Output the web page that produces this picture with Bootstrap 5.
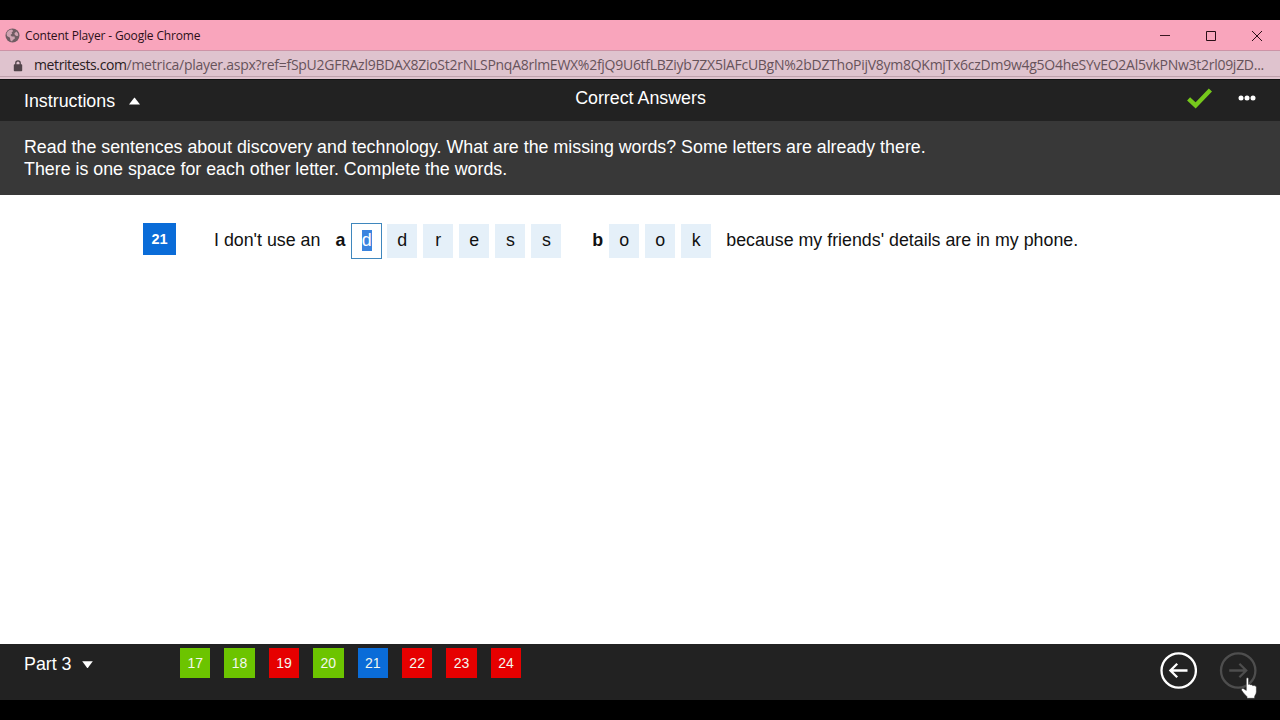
<!DOCTYPE html>
<html lang="en">
<head>
<meta charset="utf-8">
<meta name="viewport" content="width=device-width, initial-scale=1">
<title>Content Player</title>
<link href="https://cdn.jsdelivr.net/npm/bootstrap@5.3.0/dist/css/bootstrap.min.css" rel="stylesheet">
<style>
body{font-family:"Liberation Sans",Arial,sans-serif;font-size:17.82px;line-height:22px;color:#111;background:#000;overflow:hidden}
svg{display:block;flex:none}
.screen{height:720px;padding:20px 0}
.ui-font{font-family:"Open Sans","Noto Sans",sans-serif}
.titlebar{height:31px;background:#f9a5bc;border-bottom:1px solid #cd93a6;padding:0 17px 0 5px}
.caption-text{font-size:12px;letter-spacing:-.155px;color:#2b1018;margin:2px 0 0 5px}
.winbtns{gap:34px;padding-top:1px}
.addressbar{height:29px;background:#dfc3ce;border-bottom:1px solid #111;box-shadow:inset 0 -2px #dfc3ce,inset 0 -3px #bfa0ac;padding:0 0 2px 13px}
.url{font-size:14px;letter-spacing:-.27px;color:#67535b;margin:1px 0 0 11px}
.host{color:#2a1c22;letter-spacing:-.39px}
.topbar{height:41px;background:#222;color:#fff;padding:0 23px 0 24px}
.topbar .side{width:200px}
.topbar .toggle{gap:14px;padding-top:1px}
.page-title{padding-bottom:5px}
.tools{gap:24px;padding-bottom:5px}
.instructions{height:74px;background:#383838;color:#fff;padding:15px 24px 0}
.work{background:#fff;padding:28px 0 0 143px}
.qnum{width:33px;height:32px;background:#0a6cd8;color:#fff;font-size:14.5px;font-weight:700;margin-right:38px}
.lead-in{margin-right:15px}
.word{gap:6px;margin-left:6px}
.word-1{margin-right:31px}
.word-2{margin-right:15px}
.cell{width:30px;height:34px;background:#e5f0f9;padding-bottom:2px}
.cell.active{width:31px;height:36px;margin-right:-1px;background:#fff;border:1px solid #3f87bd}
.cell.active span{background:#3a84df;color:#fff;line-height:21px}
.sentence>span,.sentence>b{padding-bottom:2px}
.bottombar{height:56px;background:#222;color:#fff;padding:4px 23px 0 24px}
.part{width:156px;height:31px;gap:10px}
.tiles{gap:14px}
.tile{width:30.4px;height:30.4px;font-size:14px;color:#f4f8ee}
.ok{background:#6cc400}
.bad{background:#e60000}
.now{background:#0a6cd8}
.nav-arrows{gap:22px;padding-top:4px}
.pointer{right:-1px;top:29px}
</style>
</head>
<body>
<div class="screen d-flex flex-column">
  <header class="titlebar ui-font d-flex align-items-center">
    <svg width="15" height="15" viewBox="0 0 15 15"><circle cx="7.5" cy="7.5" r="7" fill="#705c63"/><path d="M1.500 5.500C2.500 3 4.500 1.600 7 1.600L8.200 3 6.600 4.400 7.200 5.600 5.400 7 6.800 8.400 9.600 8.600 9.900 10.400 7.800 12 7 13.600 5.400 12.600 5 9.800 2 8zM9.400 5.200l2-1.800 1.600 2.100.2 2.300-1.700.2-1.600-1z" fill="#cfa3b1"/></svg>
    <span class="caption-text">Content Player - Google Chrome</span>
    <div class="winbtns d-flex align-items-center ms-auto">
      <svg width="12" height="12" viewBox="0 0 12 12"><path d="M1 5.500h10" stroke="#3a1822"/></svg>
      <svg width="12" height="12" viewBox="0 0 12 12"><path d="M1.500 1.500h9v9h-9z" fill="none" stroke="#2a0f17"/></svg>
      <svg width="12" height="12" viewBox="0 0 12 12"><path d="M1 1l10 10M11 1L1 11" stroke="#2a0f17"/></svg>
    </div>
  </header>
  <div class="addressbar ui-font d-flex align-items-center">
    <svg class="mt-1" width="10" height="12" viewBox="0 0 10 12"><path d="M2.800 5V3a2.200 2.200 0 0 1 4.400 0v2" fill="none" stroke="#51444a" stroke-width="1.300"/><rect x=".8" y="4.300" width="8.400" height="6.900" rx=".8" fill="#51444a"/></svg>
    <span class="url text-nowrap"><span class="host">metritests.com</span>/metrica/player.aspx?ref=fSpU2GFRAzl9BDAX8ZioSt2rNLSPnqA8rlmEWX%2fjQ9U6tfLBZiyb7ZX5lAFcUBgN%2bDZThoPijV8ym8QKmjTx6czDm9w4g5O4heSYvEO2Al5vkPNw3t2rl09jZD...</span>
  </div>
  <div class="topbar d-flex align-items-center justify-content-between">
    <div class="side toggle d-flex align-items-center">
      <span>Instructions</span>
      <svg width="11" height="8" viewBox="0 0 11 8"><path d="M0 7.500L5.200.8h.6L11 7.500z" fill="#fff"/></svg>
    </div>
    <span class="page-title">Correct Answers</span>
    <div class="side tools d-flex align-items-center justify-content-end">
      <svg width="27" height="22" viewBox="0 0 27 22"><path d="M2.600 11.800l7 6.600L24.400 3" fill="none" stroke="#76c81c" stroke-width="4.400"/></svg>
      <svg width="20" height="6" viewBox="0 0 20 6"><g fill="#fff"><circle cx="4" cy="3" r="2.500"/><circle cx="10" cy="3" r="2.500"/><circle cx="16" cy="3" r="2.500"/></g></svg>
    </div>
  </div>
  <div class="instructions text-nowrap">Read the sentences about discovery and technology. What are the missing words? Some letters are already there.<br>There is one space for each other letter. Complete the words.</div>
  <main class="work flex-grow-1">
    <div class="d-flex align-items-start text-nowrap">
      <div class="qnum d-flex align-items-center justify-content-center">21</div>
      <div class="sentence d-flex align-items-center">
        <span class="lead-in">I don't use an</span>
        <b>a</b>
        <div class="word word-1 d-flex align-items-center">
          <div class="cell active d-flex align-items-center justify-content-center"><span>d</span></div>
          <div class="cell d-flex align-items-center justify-content-center">d</div>
          <div class="cell d-flex align-items-center justify-content-center">r</div>
          <div class="cell d-flex align-items-center justify-content-center">e</div>
          <div class="cell d-flex align-items-center justify-content-center">s</div>
          <div class="cell d-flex align-items-center justify-content-center">s</div>
        </div>
        <b>b</b>
        <div class="word word-2 d-flex align-items-center">
          <div class="cell d-flex align-items-center justify-content-center">o</div>
          <div class="cell d-flex align-items-center justify-content-center">o</div>
          <div class="cell d-flex align-items-center justify-content-center">k</div>
        </div>
        <span>because my friends' details are in my phone.</span>
      </div>
    </div>
  </main>
  <footer class="bottombar d-flex align-items-start">
    <div class="part d-flex align-items-center"><span>Part 3</span><svg width="11" height="8" viewBox="0 0 11 8"><path d="M.2 1.300h10.600L5.800 7.900h-.6z" fill="#fff"/></svg></div>
    <div class="tiles d-flex">
      <div class="tile ok d-flex align-items-center justify-content-center">17</div>
      <div class="tile ok d-flex align-items-center justify-content-center">18</div>
      <div class="tile bad d-flex align-items-center justify-content-center">19</div>
      <div class="tile ok d-flex align-items-center justify-content-center">20</div>
      <div class="tile now d-flex align-items-center justify-content-center">21</div>
      <div class="tile bad d-flex align-items-center justify-content-center">22</div>
      <div class="tile bad d-flex align-items-center justify-content-center">23</div>
      <div class="tile bad d-flex align-items-center justify-content-center">24</div>
    </div>
    <div class="nav-arrows d-flex ms-auto position-relative">
      <svg width="38" height="38" viewBox="0 0 38 38"><g fill="none" stroke="#fff" stroke-width="2.300"><circle cx="19.700" cy="18.500" r="17.200"/><path d="M28.500 18.500H12M18.200 11.700l-6.800 6.800 6.800 6.800"/></g></svg>
      <svg width="38" height="38" viewBox="0 0 38 38"><g fill="none" stroke="#4e4e4e" stroke-width="2.300"><circle cx="19.200" cy="18.500" r="17.200"/><path d="M10.200 18.500h16.500M20.400 11.700l6.800 6.800-6.800 6.800"/></g></svg>
      <svg class="pointer position-absolute" width="17" height="23" viewBox="0 0 17 23"><path d="M5.300 1.800c0-1.300 2.200-1.300 2.200 0v5.600c.8-.5 1.900-.3 2.200.5.800-.4 1.800-.1 2.100.8 1-.4 3.600-.2 3.600 1.600v4.200c0 2.600-1.500 3.600-1.800 5.200v1.600H6v-1.600C4.700 18.200 2.600 16.400.7 13.400c-1-1.500.9-2.600 2.300-1.500l2.300 1.500z" fill="#fff" stroke="#222" stroke-width=".5"/></svg>
    </div>
  </footer>
</div>
<script src="https://cdn.jsdelivr.net/npm/bootstrap@5.3.0/dist/js/bootstrap.bundle.min.js"></script>
</body>
</html>
